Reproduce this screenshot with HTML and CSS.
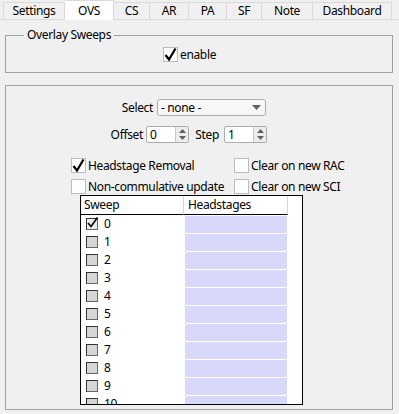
FILE: index.html
```html
<!DOCTYPE html>
<html lang="en">
<head>
    <meta charset="UTF-8">
    <title>Overlay Sweeps</title>
    <link rel="stylesheet" href="styles.css">
</head>
<body>
    <div class="tabs">
        <div class="tab w-settings">Settings</div>
        <div class="tab tab-active w-ovs">OVS</div>
        <div class="tab w-cs">CS</div>
        <div class="tab w-ar">AR</div>
        <div class="tab w-pa">PA</div>
        <div class="tab w-sf">SF</div>
        <div class="tab w-note">Note</div>
        <div class="tab w-dash">Dashboard</div>
    </div>

    <fieldset class="group">
        <legend>Overlay Sweeps</legend>
        <label class="check">
            <span class="box"><svg width="15" height="15" viewBox="0 0 15 15"><path d="M2.5 8 L6 12.5 L12.5 1.5" fill="none" stroke="#000" stroke-width="2.2"/></svg></span>enable
        </label>
    </fieldset>

    <div class="panel">
        <div class="row row-select">
            <span class="lbl lbl-select">Select</span>
            <div class="dropdown">
                <span>- none -</span>
                <svg width="9" height="5" viewBox="0 0 9 5"><path d="M0 0 L9 0 L4.5 5 Z" fill="#606060"/></svg>
            </div>
        </div>

        <div class="row row-offset">
            <span class="lbl lbl-offset">Offset</span>
            <div class="spin">
                <span class="spin-val">0</span>
                <div class="spin-btn">
                    <svg width="9" height="15" viewBox="0 0 9 15"><path d="M1 6 L4.5 2 L8 6 Z M1 9 L4.5 13 L8 9 Z" fill="#606060"/></svg>
                </div>
            </div>
            <span class="lbl lbl-step">Step</span>
            <div class="spin">
                <span class="spin-val">1</span>
                <div class="spin-btn">
                    <svg width="9" height="15" viewBox="0 0 9 15"><path d="M1 6 L4.5 2 L8 6 Z M1 9 L4.5 13 L8 9 Z" fill="#606060"/></svg>
                </div>
            </div>
        </div>

        <div class="options">
            <label class="check">
                <span class="box"><svg width="15" height="15" viewBox="0 0 15 15"><path d="M2.5 8 L6 12.5 L12.5 1.5" fill="none" stroke="#000" stroke-width="2.2"/></svg></span>Headstage Removal
            </label>
            <label class="check"><span class="box"></span>Clear on new RAC</label>
            <label class="check"><span class="box"></span>Non-commulative update</label>
            <label class="check"><span class="box"></span>Clear on new SCI</label>
        </div>

        <div class="table">
            <div class="thead">
                <div class="th th-sweep">Sweep</div>
                <div class="th th-hs">Headstages</div>
            </div>
            <div class="tr"><div class="td-sweep"><span class="cb cb-on"><svg width="13" height="13" viewBox="0 0 13 13"><path d="M2 6 L5 9.5 L11.5 0.5" fill="none" stroke="#000" stroke-width="1.6"/></svg></span>0</div><div class="td-hs"></div></div>
            <div class="tr"><div class="td-sweep"><span class="cb"></span>1</div><div class="td-hs"></div></div>
            <div class="tr"><div class="td-sweep"><span class="cb"></span>2</div><div class="td-hs"></div></div>
            <div class="tr"><div class="td-sweep"><span class="cb"></span>3</div><div class="td-hs"></div></div>
            <div class="tr"><div class="td-sweep"><span class="cb"></span>4</div><div class="td-hs"></div></div>
            <div class="tr"><div class="td-sweep"><span class="cb"></span>5</div><div class="td-hs"></div></div>
            <div class="tr"><div class="td-sweep"><span class="cb"></span>6</div><div class="td-hs"></div></div>
            <div class="tr"><div class="td-sweep"><span class="cb"></span>7</div><div class="td-hs"></div></div>
            <div class="tr"><div class="td-sweep"><span class="cb"></span>8</div><div class="td-hs"></div></div>
            <div class="tr"><div class="td-sweep"><span class="cb"></span>9</div><div class="td-hs"></div></div>
            <div class="tr"><div class="td-sweep"><span class="cb"></span>10</div><div class="td-hs"></div></div>
        </div>
    </div>
</body>
</html>
```

FILE: styles.css
```css
body {
    margin: 0;
    width: 399px;
    height: 414px;
    overflow: hidden;
    background-color: #f0f0f0;
    font-family: "Noto Sans", sans-serif;
    font-size: 12px;
    letter-spacing: -0.35px;
    color: #000;
}

/* tab strip */
.tabs {
    display: flex;
    height: 20px;
    padding-left: 3px;
    border-bottom: 1px solid #d9d9d9;
    box-sizing: border-box;
}
.tab {
    height: 17px;
    margin-top: 2px;
    box-sizing: border-box;
    border-top: 1px solid #d9d9d9;
    border-right: 1px solid #d9d9d9;
    text-align: center;
    line-height: 16px;
    background-color: #f0f0f0;
}
.tab:first-child {
    border-left: 1px solid #d9d9d9;
}
.tab-active {
    height: 20px;
    margin-top: 0;
    margin-bottom: -1px;
    background-color: #fff;
    line-height: 20px;
}
.w-settings { width: 62px; }
.w-ovs { width: 49px; }
.w-cs { width: 36px; }
.w-ar { width: 39px; }
.w-pa { width: 38px; }
.w-sf { width: 35px; }
.w-note { width: 51px; }
.w-dash { width: 79px; }

/* group box */
.group {
    margin: 7px 6px 0 5px;
    padding: 4px 0 10px 157px;
    border: 1px solid #a0a0a0;
}
.group legend {
    margin-left: -139px;
    padding: 0 3px;
    line-height: 16px;
}

/* checkboxes */
.check {
    display: flex;
    align-items: center;
    height: 15px;
    white-space: nowrap;
}
.box {
    width: 15px;
    height: 15px;
    box-sizing: border-box;
    border: 1px solid #bcbcbc;
    background-color: #fff;
    margin-right: 2px;
    flex-shrink: 0;
    position: relative;
}
.box svg {
    position: absolute;
    left: -1px;
    top: -1px;
}

/* main panel */
.panel {
    margin: 12px 6px 0 5px;
    height: 325px;
    box-sizing: border-box;
    border: 1px solid #a0a0a0;
    overflow: hidden;
}
.row {
    display: flex;
    align-items: center;
    height: 17px;
}
.row-select {
    margin-top: 13px;
    padding-left: 94px;
}
.row-offset {
    margin-top: 10px;
    padding-left: 94px;
}
.lbl {
    text-align: right;
    white-space: nowrap;
}
.lbl-select { width: 53px; margin-right: 4px; }
.lbl-offset { width: 43px; margin-right: 3px; }
.lbl-step { width: 30px; margin-right: 5px; }

.dropdown {
    width: 109px;
    height: 17px;
    box-sizing: border-box;
    border: 1px solid #acacac;
    border-radius: 3px;
    background-color: #f7f7f7;
    display: flex;
    align-items: center;
    justify-content: space-between;
    padding: 0 4px 0 3px;
    line-height: 15px;
}

.spin {
    width: 43px;
    height: 17px;
    box-sizing: border-box;
    border: 1px solid #acacac;
    border-radius: 2px;
    background-color: #fff;
    display: flex;
}
.spin-val {
    flex: 1;
    padding-left: 3px;
    line-height: 15px;
}
.spin-btn {
    width: 12px;
    border-left: 1px solid #c8c8c8;
    background-color: #ececec;
    display: flex;
    align-items: center;
    justify-content: center;
}

.options {
    display: grid;
    grid-template-columns: 163px auto;
    row-gap: 6px;
    margin-top: 15px;
    padding-left: 65px;
}

/* sweep table */
.table {
    margin: 1px 0 0 74px;
    width: 223px;
    height: 210px;
    box-sizing: border-box;
    border: 1px solid #000;
    background-color: #fff;
    overflow: hidden;
}
.thead {
    display: flex;
    height: 19px;
}
.th {
    box-sizing: border-box;
    height: 19px;
    border-bottom: 1px solid #000;
    border-right: 1px solid #d5d5d5;
    line-height: 18px;
}
.th-sweep {
    width: 103px;
    padding-left: 3px;
}
.th-hs {
    width: 104px;
    padding-left: 4px;
}
.tr {
    display: flex;
    height: 18px;
}
.td-sweep {
    width: 104px;
    display: flex;
    align-items: center;
    padding-left: 5px;
    box-sizing: border-box;
    line-height: 18px;
}
.td-hs {
    width: 102px;
    height: 17px;
    margin-top: 1px;
    background-color: #d8d8fa;
}
.cb {
    width: 12px;
    height: 12px;
    box-sizing: border-box;
    border: 1px solid #333;
    border-right-color: #666;
    border-bottom-color: #666;
    background-color: #d6d6d6;
    margin-right: 6px;
    position: relative;
    flex-shrink: 0;
}
.cb-on {
    background-color: #ececec;
}
.cb svg {
    position: absolute;
    left: -1px;
    top: -2px;
}
```
